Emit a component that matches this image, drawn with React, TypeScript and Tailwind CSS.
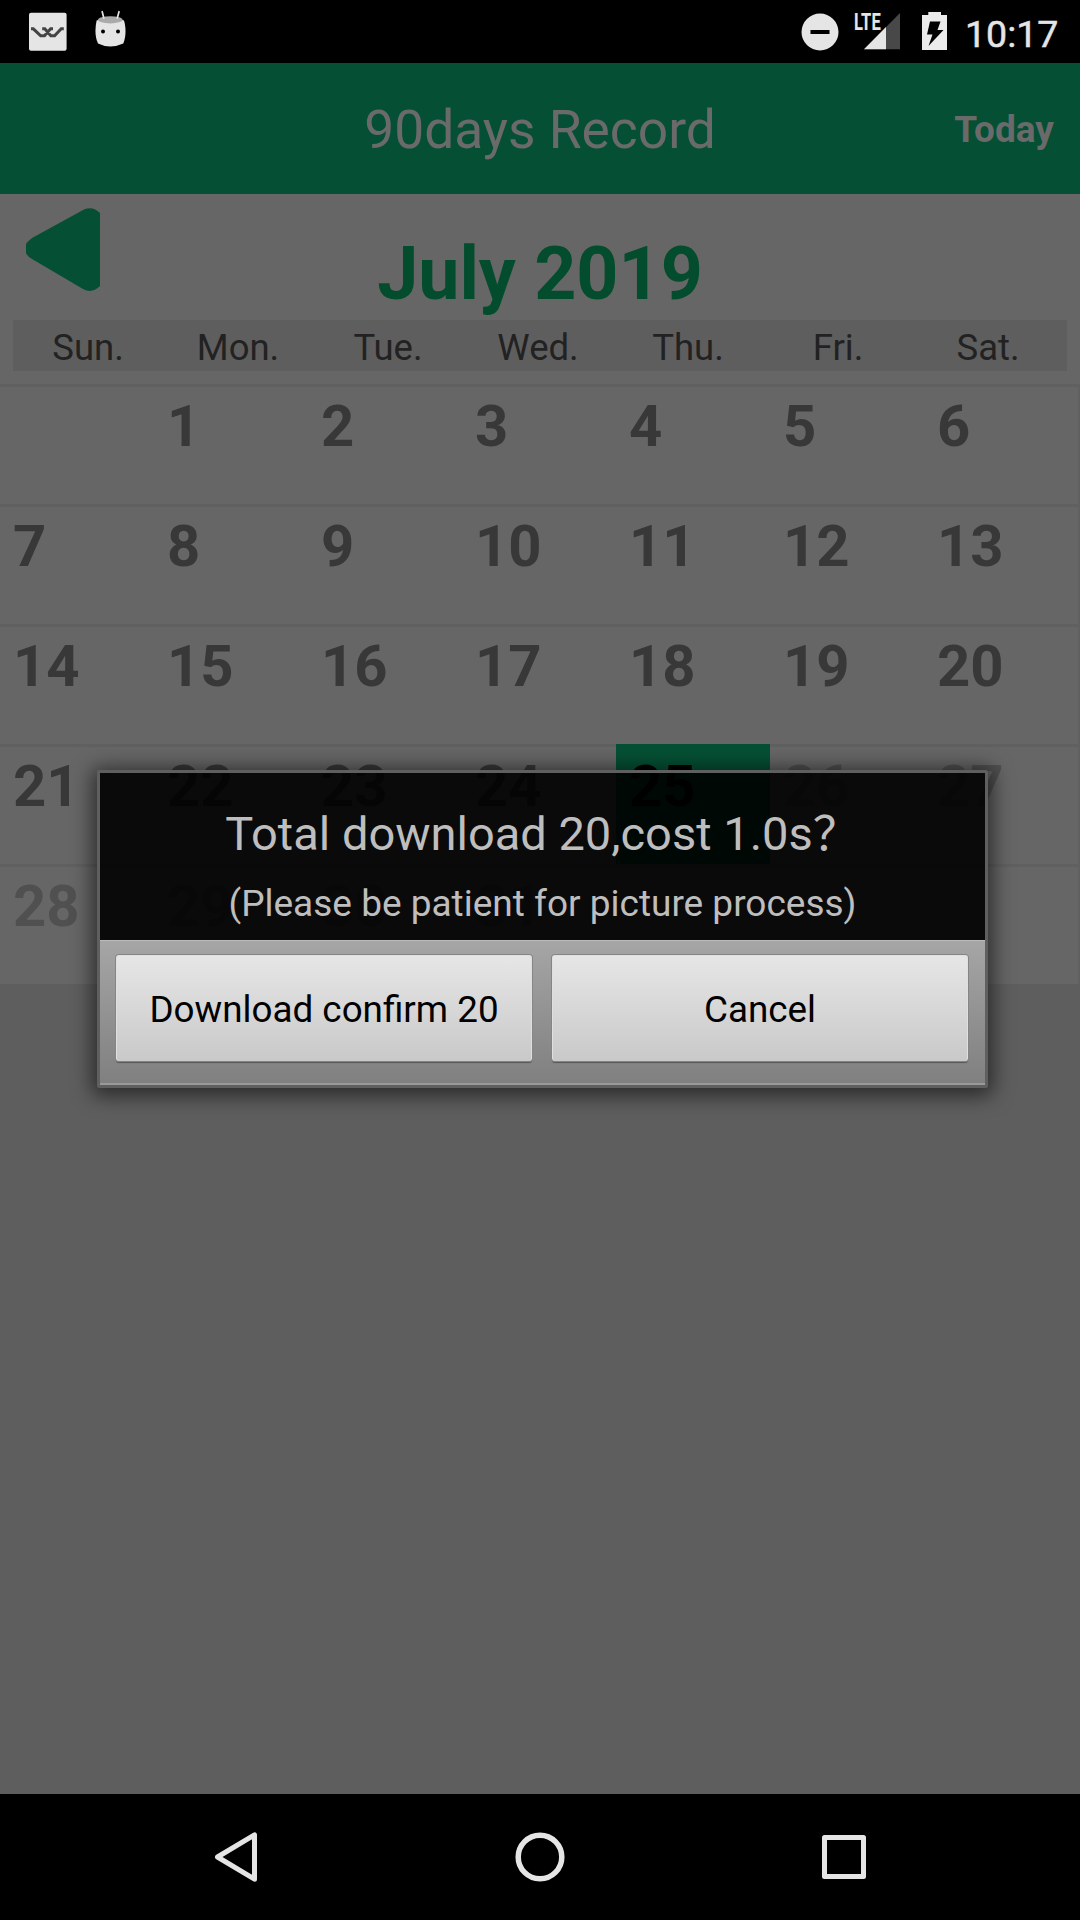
import React from "react";

const weekdays = ["Sun.", "Mon.", "Tue.", "Wed.", "Thu.", "Fri.", "Sat."];
const cells: (number | null)[] = [
  null,
  ...Array.from({ length: 31 }, (_, i) => i + 1),
  null,
  null,
  null,
];
const SELECTED = 25;

function StatusBar() {
  return (
    <div className="flex h-[63px] items-start bg-black">
      <svg className="ml-7 mt-3 h-10 w-10" viewBox="0 0 40 40">
        <rect x="1" y="0.7" width="37.6" height="38" rx="2" fill="#e5e5e5" />
        <path
          d="M3 16.8H5.3L12.7 23.8H16.5L22.6 16.8H25M14.2 16.8H16.8L22.8 23.8H26.6L33.2 16.8H35.8"
          fill="none"
          stroke="#444"
          strokeWidth="3"
        />
      </svg>
      <svg className="ml-[26px] mt-[10px] h-10 w-8" viewBox="0 0 32 40">
        <path d="M2.6 10.5Q16 5 30 10.5C32.4 19 31.8 27 29.3 33.5Q16 39.5 4 33.5C1 27 .8 19 2.6 10.5Z" fill="#e5e5e5" />
        <ellipse cx="16.3" cy="9.8" rx="12.3" ry="3.6" fill="#aaa" />
        <path d="M8.2 1.7L9.8 8M25 1.7L23.3 8" stroke="#e5e5e5" strokeWidth="1.7" strokeLinecap="round" />
        <circle cx="9" cy="21.6" r="2" fill="#000" />
        <circle cx="24" cy="21.6" r="2" fill="#000" />
      </svg>
      <div className="flex-1" />
      <svg className="mt-[13px] h-[38px] w-[38px]" viewBox="0 0 38 38">
        <circle cx="19" cy="19" r="18.5" fill="#e5e5e5" />
        <path d="M9.5 19H28.5" stroke="#000" strokeWidth="4" />
      </svg>
      <div className="relative ml-[16px] mt-[12px] h-[40px] w-[47px]">
        <svg className="h-[40px] w-[47px]" viewBox="0 0 47 40">
          <path d="M9 37.3L45 1V37.3Z" fill="#484848" />
          <path d="M9 37.3L31 15V37.3Z" fill="#e5e5e5" />
          <path d="M0 0H25V19H0Z" fill="#000" />
        </svg>
        <span className="absolute -left-px top-px origin-left scale-x-[0.72] text-[23px] font-bold leading-[19px] text-[#e5e5e5]">
          LTE
        </span>
      </div>
      <svg className="ml-[20px] mt-[12px] h-[38px] w-[26px]" viewBox="0 0 26 38">
        <path d="M6.3 0H19V3H25V38H0V3H6.3Z" fill="#ebebeb" />
        <path d="M8 9.5H18.5L15.5 18H21.5L6.5 34L10.5 22.5H5Z" fill="#000" />
      </svg>
      <span className="ml-[17px] mt-[4px] w-[115px] text-[37.5px] leading-[60px] text-[#e5e5e5] [-webkit-text-stroke:0.5px_#e5e5e5]">
        10:17
      </span>
    </div>
  );
}

function Header() {
  return (
    <header className="relative flex h-[131px] items-center justify-center bg-[#055034] pt-[2px] text-[#6a6a6a]">
      <h1 className="pt-[2px] text-[53.3px] font-normal leading-none">90days Record</h1>
      <span className="absolute right-[26px] text-[37px] font-bold leading-none">Today</span>
    </header>
  );
}

function Calendar() {
  return (
    <>
      <section className="h-[190px] bg-[#666]">
        <div className="grid h-[126px] grid-cols-[1fr_auto_1fr]">
          <svg className="ml-[26px] mt-[13px] h-[86px] w-[74px]" viewBox="0 0 74 86">
            <path
              d="M0 37Q1 35 6 31L58 2.5Q67-1 74 6V79Q66 87 57 82L6 52Q1 49 0 46Z"
              fill="#055034"
            />
          </svg>
          <h2 className="pt-[43px] text-[73.5px] font-bold leading-[75px] text-[#034d2e]">July 2019</h2>
        </div>
        <div className="mx-[13px] grid h-[51px] grid-cols-[repeat(7,150px)] items-center bg-[#5e5e5e] pt-[6px] text-center text-[36.5px] leading-none text-[#222]">
          {weekdays.map((d) => (
            <span key={d}>{d}</span>
          ))}
        </div>
      </section>
      <section className="grid grid-cols-[repeat(7,154px)] border-r-2 border-[#606060] bg-[#666]">
        {cells.map((day, i) => (
          <div
            key={i}
            className={`h-[120px] pl-[13px] text-[58px] font-bold leading-[84px] ${
              day === SELECTED
                ? "bg-[#055034] text-[#020202]"
                : `shadow-[inset_0_3px_0_#606060] ${day !== null && day > SELECTED ? "text-[#505050]" : "text-[#383838]"}`
            }`}
          >
            {day}
          </div>
        ))}
      </section>
    </>
  );
}

function DialogButton({ children }: { children: React.ReactNode }) {
  return (
    <button className="h-[106px] flex-1 rounded-[3px] border-x border-t border-[#e0e0e0] bg-linear-to-b from-[#e6e6e6] to-[#c9c9c9] pt-[2px] text-[36.8px] text-black shadow-[0_0_0_1px_#858585,0_2px_1px_#555]">
      {children}
    </button>
  );
}

function Dialog() {
  return (
    <div className="absolute left-[97px] top-[770px] w-[891px] rounded-[3px] border-[3px] border-[#5f5f5f] shadow-[0_3px_20px_5px_rgba(0,0,0,0.55)]">
      <div className="h-[167px] bg-black/90 text-center text-[#bebebe]">
        <p className="pt-[33px] font-['Roboto','Noto_Sans_CJK_SC',sans-serif] text-[47px] leading-[56px]">
          Total download 20,cost 1.0s？
        </p>
        <p className="pt-[20px] text-[37px] leading-[44px]">(Please be patient for picture process)</p>
      </div>
      <div className="flex h-[145px] gap-[20px] border-b-2 border-t border-b-[#999] border-t-[#bbb] bg-linear-to-b from-[#a6a6a6] to-[#808080] pl-[16px] pr-[17px] pt-[14px]">
        <DialogButton>Download confirm 20</DialogButton>
        <DialogButton>Cancel</DialogButton>
      </div>
    </div>
  );
}

function NavBar() {
  return (
    <nav className="flex h-[126px] items-center justify-between bg-black pl-[209px] pr-[209px]">
      <svg className="h-[54px] w-[54px]" viewBox="0 0 54 54" fill="none" stroke="#e5e5e5" strokeWidth="5" strokeLinejoin="round">
        <path d="M8.5 27L45.5 4.8V49.2Z" />
      </svg>
      <svg className="h-[54px] w-[54px]" viewBox="0 0 54 54" fill="none" stroke="#e5e5e5" strokeWidth="5.5">
        <circle cx="27" cy="27" r="21.8" />
      </svg>
      <svg className="h-[54px] w-[54px]" viewBox="0 0 54 54" fill="none" stroke="#e5e5e5" strokeWidth="5" strokeLinejoin="round">
        <rect x="7.5" y="7.5" width="39" height="39" />
      </svg>
    </nav>
  );
}

export default function App() {
  return (
    <div className="relative flex h-[1920px] w-[1080px] flex-col overflow-hidden bg-[#5e5e5e] font-['Roboto',sans-serif]">
      <StatusBar />
      <Header />
      <Calendar />
      <div className="flex-1" />
      <NavBar />
      <Dialog />
    </div>
  );
}
